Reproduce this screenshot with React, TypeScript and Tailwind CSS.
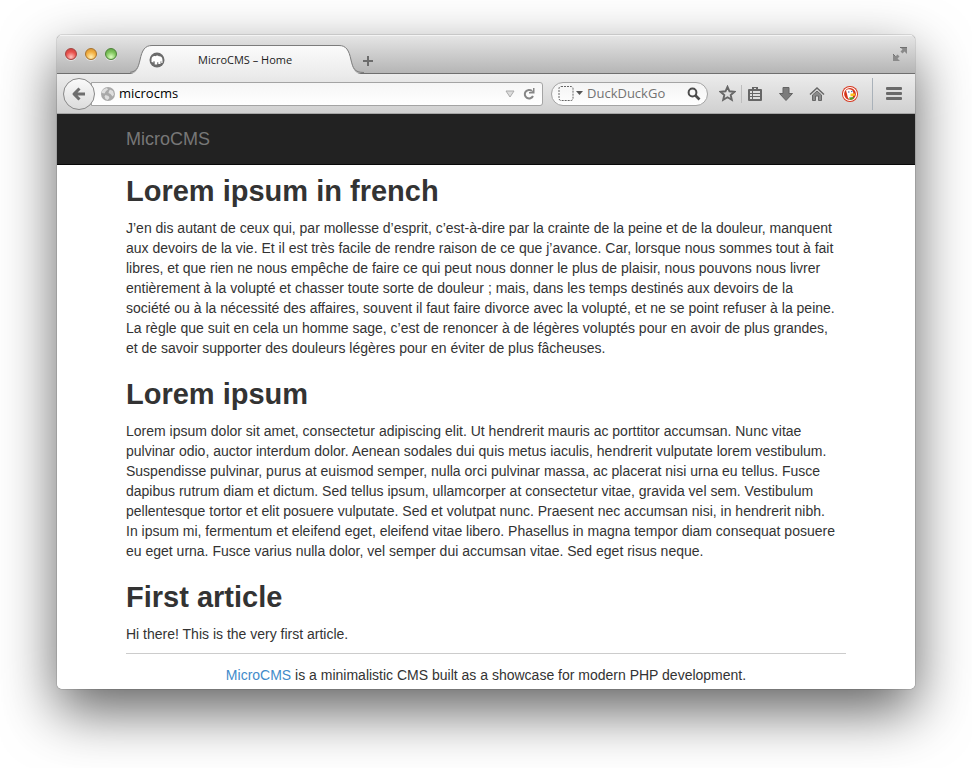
import type { ReactNode } from "react";

const articles = [
  {
    title: "Lorem ipsum in french",
    lines: [
      "J’en dis autant de ceux qui, par mollesse d’esprit, c’est-à-dire par la crainte de la peine et de la douleur, manquent",
      "aux devoirs de la vie. Et il est très facile de rendre raison de ce que j’avance. Car, lorsque nous sommes tout à fait",
      "libres, et que rien ne nous empêche de faire ce qui peut nous donner le plus de plaisir, nous pouvons nous livrer",
      "entièrement à la volupté et chasser toute sorte de douleur ; mais, dans les temps destinés aux devoirs de la",
      "société ou à la nécessité des affaires, souvent il faut faire divorce avec la volupté, et ne se point refuser à la peine.",
      "La règle que suit en cela un homme sage, c’est de renoncer à de légères voluptés pour en avoir de plus grandes,",
      "et de savoir supporter des douleurs légères pour en éviter de plus fâcheuses.",
    ],
  },
  {
    title: "Lorem ipsum",
    lines: [
      "Lorem ipsum dolor sit amet, consectetur adipiscing elit. Ut hendrerit mauris ac porttitor accumsan. Nunc vitae",
      "pulvinar odio, auctor interdum dolor. Aenean sodales dui quis metus iaculis, hendrerit vulputate lorem vestibulum.",
      "Suspendisse pulvinar, purus at euismod semper, nulla orci pulvinar massa, ac placerat nisi urna eu tellus. Fusce",
      "dapibus rutrum diam et dictum. Sed tellus ipsum, ullamcorper at consectetur vitae, gravida vel sem. Vestibulum",
      "pellentesque tortor et elit posuere vulputate. Sed et volutpat nunc. Praesent nec accumsan nisi, in hendrerit nibh.",
      "In ipsum mi, fermentum et eleifend eget, eleifend vitae libero. Phasellus in magna tempor diam consequat posuere",
      "eu eget urna. Fusce varius nulla dolor, vel semper dui accumsan vitae. Sed eget risus neque.",
    ],
  },
  { title: "First article", lines: ["Hi there! This is the very first article."] },
];

function ToolButton({ label, children }: { label: string; children: ReactNode }) {
  return (
    <button aria-label={label} className="flex h-6 w-5 items-center justify-center">
      {children}
    </button>
  );
}

function Light({ label, className }: { label: string; className: string }) {
  return (
    <button
      aria-label={label}
      className={`h-3 w-3 rounded-full border shadow-[0_1px_0_rgba(255,255,255,0.5)] ${className}`}
    />
  );
}

function TabStrip() {
  return (
    <div className="flex h-[39px] items-end bg-linear-to-b from-[#e6e6e6] to-[#b4b4b4] shadow-[inset_0_-1px_0_#6f6f6f,inset_0_1px_0_#f4f4f4]">
      <div className="mb-[14px] flex w-[73px] gap-2 pl-2">
        <Light label="Close" className="border-[#a3423f] bg-[radial-gradient(circle_at_50%_80%,#ffc4bf,#e8504c_55%,#c8403d)]" />
        <Light label="Minimize" className="border-[#a8722c] bg-[radial-gradient(circle_at_50%_80%,#fff0b4,#f2ae3f_55%,#d08f30)]" />
        <Light label="Zoom" className="border-[#4d8338] bg-[radial-gradient(circle_at_50%_80%,#dcffc0,#7dc35a_55%,#5b9e42)]" />
      </div>
      <div className="relative h-[30px] w-[232px]">
        <svg className="absolute inset-0" width="236" height="30" viewBox="0 0 236 30" fill="none">
          <defs>
            <linearGradient id="tab" x1="0" y1="0" x2="0" y2="1">
              <stop offset="0" stopColor="#fbfbfb" />
              <stop offset="1" stopColor="#ececec" />
            </linearGradient>
          </defs>
          <path d="M0 30C7 29 8 25 10 16C12 6 15 1.500 22 1.500H209C216 1.500 219 6 221 16C223 25 224 29 231 30Z" fill="url(#tab)" />
          <path d="M-3 28.500C7 28.500 8 24 10 16C12 6 15 1.500 22 1.500H209C216 1.500 219 6 221 16C223 24 224 28.500 234 28.500" stroke="#7c7c7c" />
        </svg>
        <div className="relative flex h-full items-center pt-0.5 pl-[19px] font-['Open_Sans',sans-serif] text-[11px] text-[#1c1c1c]">
          <svg width="16" height="16" viewBox="0 0 16 16">
            <circle cx="8" cy="8" r="7.500" fill="#6b6b6b" />
            <path d="M2.500 10V7C3 4.500 4.500 3.800 6.300 4.200C7.500 3.200 9 3.200 9.800 4.200C12 3.800 13.500 5.500 13.500 8V11H12.300V9L11.500 9.500V12H9.300V10.300H8.200V12.500H5.700V9.500L4.500 9V10.500Z" fill="#fff" />
          </svg>
          <span className="pl-[33px]">MicroCMS – Home</span>
        </div>
      </div>
      <button aria-label="New tab" className="mb-[7px] h-3 w-3">
        <svg width="12" height="12" viewBox="0 0 12 12">
          <path d="M6 1V11M1 6H11" stroke="#6c6c6c" strokeWidth="2" />
        </svg>
      </button>
      <button aria-label="Full screen" className="mr-[7px] mb-3 ml-auto h-4 w-4">
        <svg width="16" height="16" viewBox="0 0 16 16" fill="#8a8a8a">
          <path d="M8 1H15V8L12.500 5.500L10.500 7.500L8.500 5.500L10.500 3.500ZM1 8L3.500 10.500L5.500 8.500L7.500 10.500L5.500 12.500L8 15H1Z" />
          <path d="M8 1.500H15M1 8L3.500 10.500" fill="none" stroke="#707070" />
        </svg>
      </button>
    </div>
  );
}

function Toolbar() {
  return (
    <div className="flex h-10 items-center border-b border-[#a5a5a5] bg-linear-to-b from-[#ececec] to-[#d0d0d0] pr-3 pl-1.5 font-['Open_Sans',sans-serif]">
      <button
        aria-label="Back"
        className="z-10 flex h-8 w-8 shrink-0 items-center justify-center rounded-full border border-[#888] bg-linear-to-b from-[#fafafa] to-[#dcdcdc]"
      >
        <svg width="16" height="16" viewBox="0 0 16 16" fill="none" stroke="#6e6e6e" strokeWidth="3">
          <path d="M14 8H3M8.500 2.500L3 8L8.500 13.500" strokeLinejoin="round" />
        </svg>
      </button>
      <div className="-ml-1 flex h-6 flex-1 items-center rounded-r-[3px] border border-[#a4a4a4] bg-linear-to-b from-[#f6f6f6] to-white pr-1.5 pl-[9px]">
        <svg width="14" height="14" viewBox="0 0 14 14">
          <circle cx="7" cy="7" r="7" fill="#a9a9a9" />
          <path d="M1 4L3 2L6 1L7 2.500L5 4L3.500 6.500L1 6ZM9 2.500L12 4L13 7.500L11.500 9.500L9.500 7L7.500 6L8 4ZM4.500 8L7.500 9L8.500 11L6.500 13L4.500 12L3.500 9.500Z" fill="#dedede" />
        </svg>
        <input
          aria-label="Address"
          defaultValue="microcms"
          className="min-w-0 flex-1 bg-transparent pl-1 text-[13px] text-black outline-none"
        />
        <button aria-label="History" className="mr-[7px]">
          <svg width="10" height="8" viewBox="0 0 10 8">
            <path d="M1 1H9L5 7Z" fill="#ddd" stroke="#aaa" />
          </svg>
        </button>
        <button aria-label="Reload">
          <svg width="14" height="14" viewBox="0 0 14 14" fill="none">
            <path d="M10 4A4.300 4.300 0 1 0 11 9" stroke="#858585" strokeWidth="2" />
            <path d="M12.500 1V6.500H7V5H9.500L11 3.500V1Z" fill="#858585" />
          </svg>
        </button>
      </div>
      <div className="ml-2 flex h-6 w-[157px] items-center rounded-full border border-[#a4a4a4] bg-linear-to-b from-[#f4f4f4] to-white pr-1.5 pl-1.5">
        <svg width="25" height="15" viewBox="0 0 25 15" className="shrink-0">
          <rect x="1" y="0.500" width="14" height="14" rx="2" fill="none" stroke="#666" strokeDasharray="2 1" />
          <path d="M18 5H25L21.500 9Z" fill="#555" />
        </svg>
        <input
          aria-label="Search"
          placeholder="DuckDuckGo"
          className="min-w-0 flex-1 bg-transparent pl-1 text-[13px] outline-none placeholder:text-[#737373]"
        />
        <button aria-label="Submit search">
          <svg width="14" height="14" viewBox="0 0 14 14" fill="none" stroke="#4c4c4c">
            <circle cx="5.500" cy="5.500" r="3.900" strokeWidth="2" />
            <path d="M8.500 8.500L12.500 12.500" strokeWidth="2.600" />
          </svg>
        </button>
      </div>
      <div className="ml-[9px] flex items-center">
        <ToolButton label="Bookmark">
          <svg width="17" height="17" viewBox="0 0 17 17" fill="none">
            <path d="M8.500 1.800L10.500 6.300L15.400 6.800L11.700 10L12.800 14.900L8.500 12.300L4.200 14.900L5.300 10L1.600 6.800L6.500 6.300Z" stroke="#666" strokeWidth="1.900" />
          </svg>
        </ToolButton>
        <span className="ml-1 h-[18px] w-px bg-[#bdbdbd]" />
        <span className="ml-[3px] flex gap-[11px]">
          <ToolButton label="Bookmarks">
            <svg width="16" height="16" viewBox="0 0 16 16">
              <path d="M5 3V1H11V3H14Q15 3 15 4V14Q15 15 14 15H2Q1 15 1 14V4Q1 3 2 3Z" fill="#666" />
              <path d="M7 2H9V3H7ZM3 5H13V13H3Z" fill="#dedede" />
              <path d="M3 7.500H13M3 10.500H13M5.500 5V13" stroke="#666" />
            </svg>
          </ToolButton>
          <ToolButton label="Downloads">
            <svg width="16" height="16" viewBox="0 0 16 16">
              <path d="M5 1.500H11V7.500H14.500L8 14.500L1.500 7.500H5Z" fill="#7c7c7c" stroke="#636363" />
            </svg>
          </ToolButton>
          <ToolButton label="Home">
            <svg width="16" height="16" viewBox="0 0 16 16">
              <path d="M3.500 9L8 5L12.500 9V14.500H9.500V10H6.500V14.500H3.500Z" fill="#8a8a8a" stroke="#666" />
              <path d="M1 8.500L8 2L15 8.500" fill="none" stroke="#666" strokeWidth="1.500" />
            </svg>
          </ToolButton>
        </span>
        <span className="ml-[13px]">
          <ToolButton label="DuckDuckGo">
            <svg width="16" height="16" viewBox="0 0 16 16">
              <circle cx="8" cy="8" r="8" fill="#d5341b" />
              <circle cx="8" cy="8" r="6.500" fill="none" stroke="#fff" strokeWidth="1.200" />
              <path d="M4 4.500C5.500 2.500 11 2.500 11.300 6.500L10.500 12.500L8 13.800L6 12L5 8Z" fill="#fff" />
              <path d="M8.500 7.500H13V9.500L8.500 10.500Z" fill="#fbc21d" />
              <path d="M7 11.500L11.500 11V13L8 14Z" fill="#4ba22c" />
              <circle cx="6.800" cy="6" r="0.800" fill="#3763a8" />
              <circle cx="9.800" cy="5.500" r="0.700" fill="#3763a8" />
            </svg>
          </ToolButton>
        </span>
        <span className="ml-3 h-8 w-px bg-[#a9b1b9]" />
        <button aria-label="Menu" className="ml-3">
          <svg width="18" height="14" viewBox="0 0 18 14" fill="#6a6a6a">
            <rect x="1" y="0" width="16" height="3" rx="1" />
            <rect x="1" y="5" width="16" height="3" rx="1" />
            <rect x="1" y="10" width="16" height="3" rx="1" />
          </svg>
        </button>
      </div>
    </div>
  );
}

export default function App() {
  return (
    <div className="min-h-screen bg-white px-[57px] pt-[35px] pb-[78px]">
      <div className="overflow-hidden rounded-[5px] shadow-[0_0_1px_#000,0_22px_56px_rgba(0,0,0,0.62)]">
        <TabStrip />
        <Toolbar />
        <div className="bg-white font-['Liberation_Sans',Arial,sans-serif] text-sm/5 text-[#333]">
          <nav className="border-b border-[#080808] bg-[#222]">
            <div className="mx-auto flex h-[50px] max-w-[750px] items-center px-[15px]">
              <a href="#" className="text-lg/5 text-[#777]">
                MicroCMS
              </a>
            </div>
          </nav>
          <div className="mx-auto max-w-[750px] px-[15px]">
            {articles.map((article) => (
              <article key={article.title} className="pt-2.5 pb-2.5 last-of-type:pb-[9px]">
                <h2 className="mb-2.5 text-[29px]/[33px] font-bold">{article.title}</h2>
                <p className="whitespace-pre-line">{article.lines.join("\n")}</p>
              </article>
            ))}
            <footer className="border-t border-[#ccc] pt-[11px] pb-1 text-center">
              <a href="#" className="text-[#428bca]">
                MicroCMS
              </a>{" "}
              is a minimalistic CMS built as a showcase for modern PHP development.
            </footer>
          </div>
        </div>
      </div>
    </div>
  );
}
